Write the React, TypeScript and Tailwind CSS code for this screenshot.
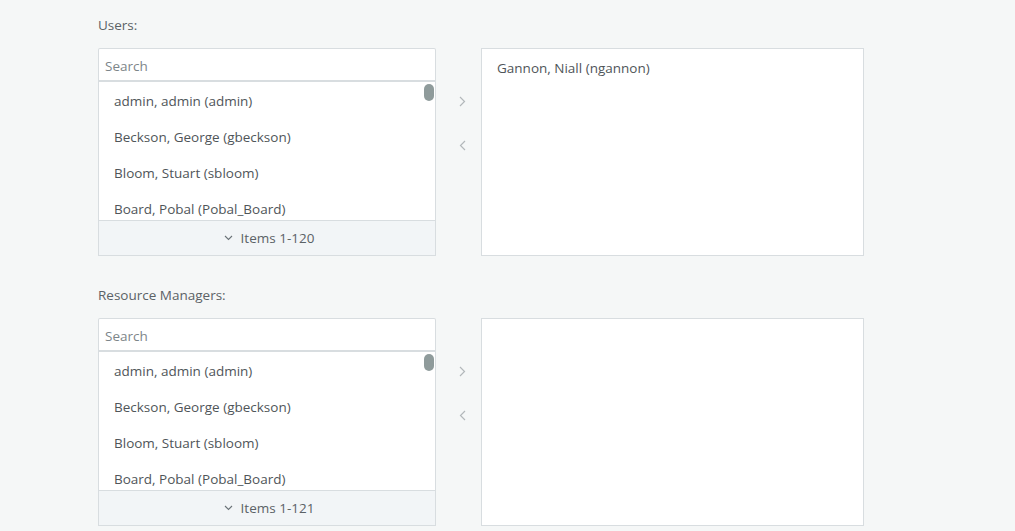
import React from 'react';

const USERS = [
  'admin, admin (admin)',
  'Beckson, George (gbeckson)',
  'Bloom, Stuart (sbloom)',
  'Board, Pobal (Pobal_Board)',
];

interface PickerProps {
  label: string;
  total: number;
  selected: string[];
}

function Chevron({ dir }: { dir: 'left' | 'right' | 'down' }) {
  if (dir === 'down') {
    return (
      <svg width="9" height="6" viewBox="0 0 9 6" fill="none" stroke="#6b7378" strokeWidth="1.1">
        <path d="M1 1l3.5 3.5L8 1" />
      </svg>
    );
  }
  return (
    <svg width="7" height="11" viewBox="0 0 7 11" fill="none" stroke="#b3b8bb" strokeWidth="1.2">
      {dir === 'right' ? <path d="M1 1l4.5 4.5L1 10" /> : <path d="M6 1L1.5 5.5 6 10" />}
    </svg>
  );
}

function Picker({ label, total, selected }: PickerProps) {
  return (
    <div className="mb-[29px]">
      <div className="h-[20px] leading-[20px] mb-[13px] text-[13.5px] text-[#5b6266]">{label}</div>
      <div className="flex">
        {/* Available list */}
        <div className="w-[338px] flex flex-col">
          <div className="h-[34px] bg-white border border-[#d8dde0] border-b-2 rounded-t-[2px] flex items-center pl-[6px] pt-[3px] text-[13.5px] text-[#7d8589]">
            Search
          </div>
          <div className="relative h-[138px] pt-[1px] bg-white border-x border-[#d8dde0] overflow-hidden">
            {USERS.map((u) => (
              <div key={u} className="h-[36px] flex items-center pl-[15px] text-[13.5px] text-[#4f5559]">
                {u}
              </div>
            ))}
            <div className="absolute right-[1px] top-[2px] w-[10px] h-[17px] rounded-full bg-[#8f9b9b]" />
          </div>
          <div className="h-[36px] bg-[#f2f5f7] border border-[#d8dde0] flex items-center justify-center gap-[8px] pl-[4px] text-[13.5px] leading-[20px] text-[#5b6266]">
            <Chevron dir="down" />
            <span>Items 1-{total}</span>
          </div>
        </div>

        {/* Move buttons */}
        <div className="w-[45px] flex flex-col items-center pl-[7px] pt-[48px] gap-[33px]">
          <Chevron dir="right" />
          <Chevron dir="left" />
        </div>

        {/* Selected list */}
        <div className="w-[383px] h-[208px] bg-white border border-[#d8dde0] pt-[9px]">
          {selected.map((s) => (
            <div key={s} className="h-[20px] leading-[20px] pl-[15px] text-[13.5px] text-[#4f5559]">
              {s}
            </div>
          ))}
        </div>
      </div>
    </div>
  );
}

export default function App() {
  return (
    <div
      className="w-[1015px] h-[531px] overflow-hidden bg-[#f5f7f7] pl-[98px] pt-[15px]"
      style={{ fontFamily: '"Open Sans", "Noto Sans", sans-serif' }}
    >
      <Picker label="Users:" total={120} selected={['Gannon, Niall (ngannon)']} />
      <Picker label="Resource Managers:" total={121} selected={[]} />
    </div>
  );
}
